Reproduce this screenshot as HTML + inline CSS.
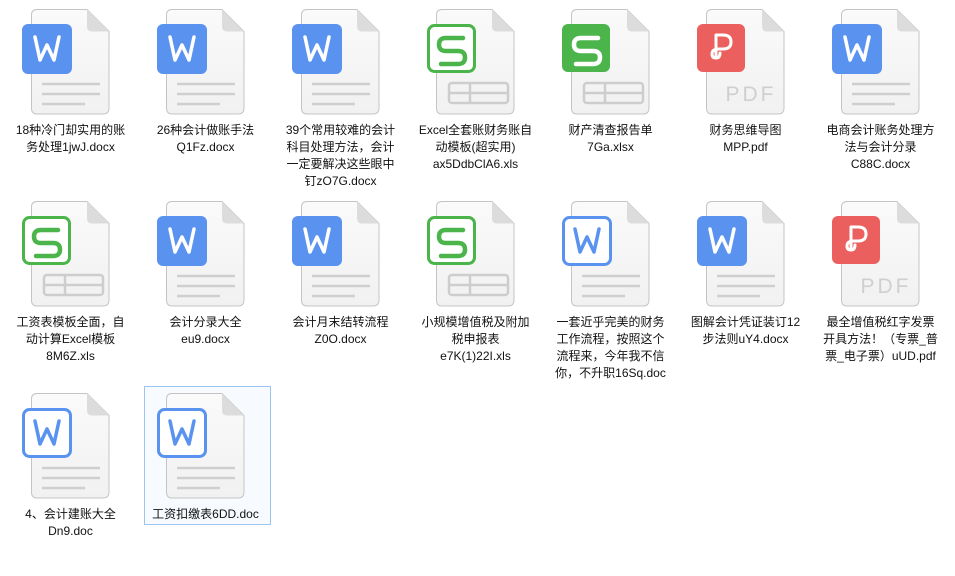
<!DOCTYPE html>
<html><head><meta charset="utf-8"><style>
body{margin:0;width:955px;height:544px;background:#fff;overflow:hidden;position:relative;font-family:"Liberation Sans","Noto Sans CJK SC",sans-serif}
.c{position:absolute;width:135px;height:192px}
.c svg{position:absolute;left:17px;top:5px}
.t{position:absolute;top:122px;left:0;width:135px;text-align:center;font-size:12px;line-height:17px;color:#111;white-space:nowrap}
.sel{position:absolute;left:144px;top:386px;width:125px;height:137px;border:1px solid #9cc4ec;background:#f7fbff}
</style></head><body>
<svg width="0" height="0" style="position:absolute">
<defs>
<linearGradient id="g" x1="0" y1="0" x2="0" y2="1"><stop offset="0" stop-color="#fafafa"/><stop offset="1" stop-color="#f1f1f1"/></linearGradient>
<g id="pg"><path d="M6,0.5H56L78,22.5V99Q78,105 72,105H6Q0.5,105 0.5,99V6Q0.5,0.5 6,0.5Z" fill="url(#g)" stroke="#c4c4c4"/><path d="M56,0.5V17Q56,22.5 61,22.5H78Z" fill="#dcdcdc"/></g>
<g id="lines" stroke="#cfcfcf" stroke-width="2.5"><line x1="22" y1="79" x2="80" y2="79"/><line x1="22" y1="89" x2="80" y2="89"/><line x1="22" y1="99" x2="65" y2="99"/></g>
<g id="grid" fill="none" stroke="#cdcdcd" stroke-width="2.5"><rect x="24" y="78" width="59" height="20" rx="3"/><line x1="24" y1="88" x2="83" y2="88"/><line x1="45" y1="78" x2="45" y2="98"/></g>
<path id="wg" d="M13,13L18,36L25,21L32,36L37,13" fill="none" stroke="#fff" stroke-width="3.5" stroke-linejoin="round" stroke-linecap="round"/>
<g id="W"><use href="#pg" x="11" y="4"/><use href="#lines"/><rect x="2" y="19" width="50" height="50" rx="6" fill="#5a93ef"/><use href="#wg" x="2" y="19"/></g>
<g id="WO"><use href="#pg" x="11" y="4"/><use href="#lines"/><rect x="3.5" y="20.5" width="47" height="47" rx="6" fill="#fff" stroke="#5a93ef" stroke-width="3"/><path d="M15,32L20,55L27,40L34,55L39,32" fill="none" stroke="#5a93ef" stroke-width="3.5" stroke-linejoin="round" stroke-linecap="round"/></g>
<path id="sg" d="M36,15H19Q12,15 12,21.5Q12,28 19,28H31Q38,28 38,34.5Q38,41 31,41H14" fill="none" stroke-width="4.5" stroke-linecap="round"/>
<g id="S"><use href="#pg" x="11" y="4"/><use href="#grid"/><rect x="2" y="19" width="48" height="48" rx="6" fill="#4bb44a"/><use href="#sg" x="2" y="18" stroke="#fff"/></g>
<g id="SO"><use href="#pg" x="11" y="4"/><use href="#grid"/><rect x="3.5" y="20.5" width="46" height="46" rx="6" fill="#fff" stroke="#4bb44a" stroke-width="3"/><use href="#sg" x="2" y="18" stroke="#4bb44a"/></g>
<g id="P"><use href="#pg" x="11" y="4"/><rect x="2" y="19" width="48" height="48" rx="6" fill="#ec5f5f"/><path d="M21,52V30H28Q36,30 36,37Q36,44 28,44H24Q17,44 17,49Q17,53 21,53Q25,53 25,48" fill="none" stroke="#fff" stroke-width="3" stroke-linecap="round" stroke-linejoin="round"/><text x="56" y="96" text-anchor="middle" font-family="Liberation Sans,sans-serif" font-size="21" fill="#cfcfcf" letter-spacing="3">PDF</text></g>
</defs></svg>

<div class="c" style="left:3px;top:0"><svg width="100" height="110"><use href="#W"/></svg><div class="t">18种冷门却实用的账<br>务处理1jwJ.docx</div></div>
<div class="c" style="left:138px;top:0"><svg width="100" height="110"><use href="#W"/></svg><div class="t">26种会计做账手法<br>Q1Fz.docx</div></div>
<div class="c" style="left:273px;top:0"><svg width="100" height="110"><use href="#W"/></svg><div class="t">39个常用较难的会计<br>科目处理方法，会计<br>一定要解决这些眼中<br>钉zO7G.docx</div></div>
<div class="c" style="left:408px;top:0"><svg width="100" height="110"><use href="#SO"/></svg><div class="t">Excel全套账财务账自<br>动模板(超实用)<br>ax5DdbClA6.xls</div></div>
<div class="c" style="left:543px;top:0"><svg width="100" height="110"><use href="#S"/></svg><div class="t">财产清查报告单<br>7Ga.xlsx</div></div>
<div class="c" style="left:678px;top:0"><svg width="100" height="110"><use href="#P"/></svg><div class="t">财务思维导图<br>MPP.pdf</div></div>
<div class="c" style="left:813px;top:0"><svg width="100" height="110"><use href="#W"/></svg><div class="t">电商会计账务处理方<br>法与会计分录<br>C88C.docx</div></div>

<div class="c" style="left:3px;top:192px"><svg width="100" height="110"><use href="#SO"/></svg><div class="t">工资表模板全面，自<br>动计算Excel模板<br>8M6Z.xls</div></div>
<div class="c" style="left:138px;top:192px"><svg width="100" height="110"><use href="#W"/></svg><div class="t">会计分录大全<br>eu9.docx</div></div>
<div class="c" style="left:273px;top:192px"><svg width="100" height="110"><use href="#W"/></svg><div class="t">会计月末结转流程<br>Z0O.docx</div></div>
<div class="c" style="left:408px;top:192px"><svg width="100" height="110"><use href="#SO"/></svg><div class="t">小规模增值税及附加<br>税申报表<br>e7K(1)22I.xls</div></div>
<div class="c" style="left:543px;top:192px"><svg width="100" height="110"><use href="#WO"/></svg><div class="t">一套近乎完美的财务<br>工作流程，按照这个<br>流程来，今年我不信<br>你，不升职16Sq.doc</div></div>
<div class="c" style="left:678px;top:192px"><svg width="100" height="110"><use href="#W"/></svg><div class="t">图解会计凭证装订12<br>步法则uY4.docx</div></div>
<div class="c" style="left:813px;top:192px"><svg width="100" height="110"><use href="#P"/></svg><div class="t">最全增值税红字发票<br>开具方法！（专票_普<br>票_电子票）uUD.pdf</div></div>

<div class="sel"></div>
<div class="c" style="left:3px;top:384px"><svg width="100" height="110"><use href="#WO"/></svg><div class="t">4、会计建账大全<br>Dn9.doc</div></div>
<div class="c" style="left:138px;top:384px"><svg width="100" height="110"><use href="#WO"/></svg><div class="t">工资扣缴表6DD.doc</div></div>
</body></html>
